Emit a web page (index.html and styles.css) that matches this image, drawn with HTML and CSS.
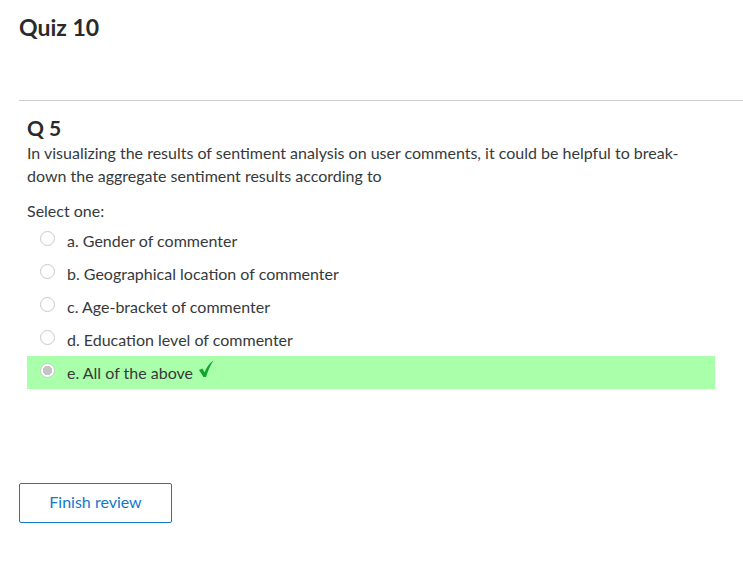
FILE: index.html
```html
<!DOCTYPE html>
<html>
<head>
<meta charset="utf-8">
<link rel="stylesheet" href="styles.css">
</head>
<body>
<div class="page">
  <h1 class="title">Quiz 10</h1>
  <hr class="rule">
  <div class="question">
    <h2 class="qno">Q 5</h2>
    <p class="qtext">In visualizing the results of sentiment analysis on user comments, it could be helpful to break-down the aggregate sentiment results according to</p>
    <div class="prompt">Select one:</div>
    <div class="answers">
      <div class="opt"><span class="radio"></span><span>a. Gender of commenter</span></div>
      <div class="opt"><span class="radio"></span><span>b. Geographical location of commenter</span></div>
      <div class="opt"><span class="radio"></span><span>c. Age-bracket of commenter</span></div>
      <div class="opt"><span class="radio"></span><span>d. Education level of commenter</span></div>
      <div class="opt correct"><span class="radio checked"></span><span>e. All of the above</span>
        <svg class="tick" width="16" height="18" viewBox="0 0 16 18"><path d="M1 10 L4.5 8.5 L6.5 12.5 C8.5 7.5 11.5 3 15.5 0.5 C12.5 5 10 10.5 8 17 L5.5 17 Z" fill="#12a32e"/></svg>
      </div>
    </div>
  </div>
  <div class="actions">
    <button class="finish">Finish review</button>
  </div>
</div>
</body>
</html>
```
FILE: styles.css
```css
html, body {
  margin: 0;
  padding: 0;
  background: #fff;
}
body {
  font-family: Lato, "Open Sans", sans-serif;
  color: #373a3c;
}
.page {
  padding: 13px 0 0 19px;
}
.title {
  margin: 0;
  font-size: 23px;
  font-weight: 700;
  line-height: 28px;
  color: #2a2a2a;
}
.rule {
  margin: 59px 0 0 0;
  border: 0;
  border-top: 1px solid #cfcfcf;
  height: 0;
}
.question {
  padding: 15px 28px 0 8px;
}
.qno {
  margin: 0;
  font-size: 21px;
  font-weight: 700;
  line-height: 24px;
  color: #2a2a2a;
}
.qtext {
  margin: 0;
  margin-top: 1px;
  font-size: 16px;
  line-height: 23px;
}
.prompt {
  margin-top: 14px;
  font-size: 16px;
  line-height: 20px;
}
.answers {
  margin-top: 3px;
}
.opt {
  display: flex;
  align-items: center;
  height: 33px;
  font-size: 16px;
  padding-left: 13px;
}
.radio {
  width: 15px;
  height: 15px;
  border: 1px solid #c9c9c9;
  border-radius: 50%;
  background: #fff;
  margin-right: 12px;
  box-sizing: border-box;
  position: relative;
  top: -2px;
}
.radio.checked {
  background: radial-gradient(circle, #c4c4c4 0 4.5px, #fff 5px);
}
.correct {
  background: #aaffaa;
}
.tick {
  margin-left: 5px;
  position: relative;
  top: -4px;
}
.actions {
  margin-top: 94px;
}
.finish {
  width: 153px;
  height: 40px;
  padding: 0 0 3px 0;
  border: 1px solid #1177d1;
  border-radius: 2px;
  background: #fff;
  color: #1177d1;
  font-family: Lato, "Open Sans", sans-serif;
  font-size: 16px;
}
```
